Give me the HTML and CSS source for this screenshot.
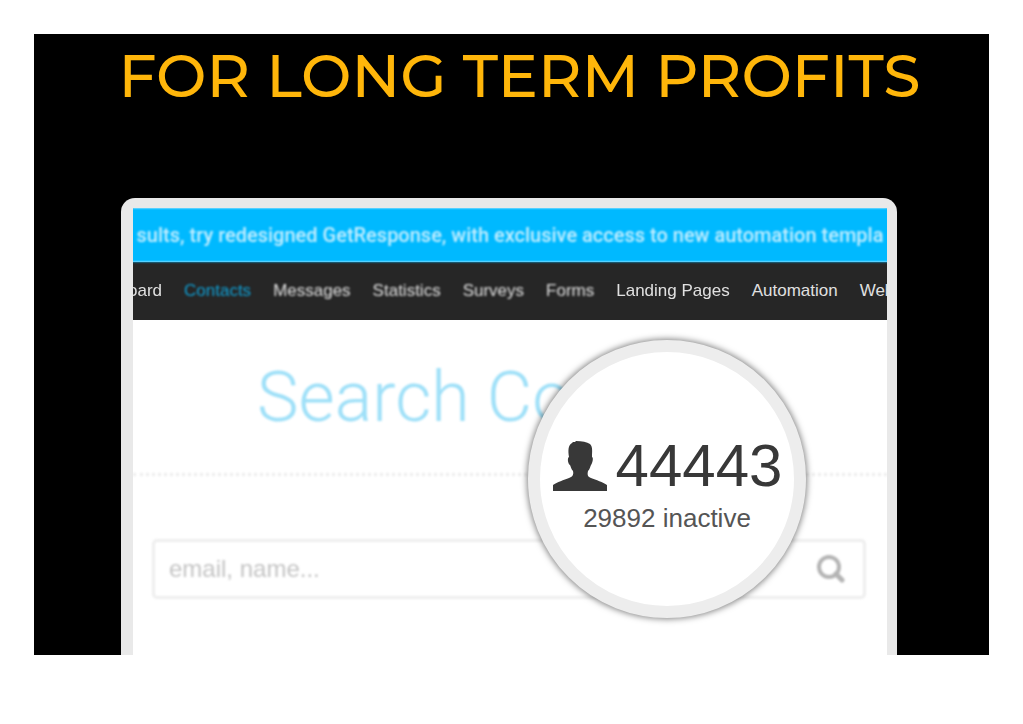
FILE: index.html
```html
<!DOCTYPE html>
<html lang="en">
<head>
  <meta charset="utf-8">
  <title>For long term profits</title>
  <link rel="stylesheet" href="styles.css">
</head>
<body>
<div class="slide">
  <h1 class="slide-title">FOR LONG TERM PROFITS</h1>
  <div class="device">
    <div class="screen">
      <p class="banner">sults, try redesigned GetResponse, with exclusive access to new automation templa</p>
      <nav class="menu">
        <a href="#" class="soft">oard</a>
        <a href="#" class="active blurred">Contacts</a>
        <a href="#" class="blurred">Messages</a>
        <a href="#" class="blurred">Statistics</a>
        <a href="#" class="blurred">Surveys</a>
        <a href="#" class="blurred">Forms</a>
        <a href="#" class="soft">Landing Pages</a>
        <a href="#">Automation</a>
        <a href="#">Web</a>
      </nav>
      <h2 class="heading">Search Co</h2>
      <form class="search">
        <input type="text" class="search-input" aria-label="Search contacts" placeholder="email, name...">
        <button type="button" class="search-button" aria-label="Search">
          <svg width="28" height="28" viewBox="0 0 28 28" fill="none" stroke="#b4b4b4">
            <circle cx="12" cy="12" r="10" stroke-width="4"/>
            <path d="M19 19l6 6" stroke-width="5" stroke-linecap="round"/>
          </svg>
        </button>
      </form>
    </div>
    <div class="lens">
      <div class="lens-count">
        <svg width="56" height="50" viewBox="0 0 56 50" fill="#383838">
          <path d="M1 50V44C5 41 12 39 17 37C20 36 22 34 21 30C19 28 19 26 18 24C16 23 15 17 17 16C16 10 16 4 20 2L21 1L23 1L24 0C30 0 35 1 38 3C41 6 40 11 40 16C42 17 40 23 39 24C38 26 38 28 36 30C35 34 36 36 39 37C44 39 51 41 55 44V50Z"/>
        </svg>
        <span>44443</span>
      </div>
      <p class="lens-note">29892 inactive</p>
    </div>
  </div>
</div>
</body>
</html>
```
FILE: styles.css
```css
body {
  margin: 0;
  padding: 34px;
  background: #fff;
  font-family: "Liberation Sans", Arial, sans-serif;
}

.slide {
  background: #000;
  overflow: hidden;
}

.slide-title {
  margin: 0;
  padding: 4px 0 84px 16px;
  color: #ffb60a;
  font-family: Montserrat, Inter, sans-serif;
  font-size: 60px;
  font-weight: 500;
  line-height: 76px;
  text-align: center;
  white-space: nowrap;
}

.device {
  position: relative;
  margin: 0 92px 0 87px;
  border: 12px solid #e9e9e9;
  border-width: 10px 10px 0 12px;
  border-radius: 14px 14px 0 0;
  background: #fff;
}

.screen {
  overflow: hidden;
  padding-bottom: 56px;
}

.banner {
  margin: 0 -3px;
  background: #00b9ff;
  color: #c4eeff;
  font-family: Roboto, sans-serif;
  font-size: 20px;
  font-weight: 500;
  line-height: 54px;
  text-align: center;
  white-space: nowrap;
  filter: blur(0.8px);
}

.menu {
  display: flex;
  gap: 22px;
  margin-left: -5px;
  background: #262626;
  line-height: 58px;
  white-space: nowrap;
}
.menu a {
  color: #e0e0e0;
  font-size: 17px;
  text-decoration: none;
}
.menu .active {
  color: #0f9fd4;
}

.soft {
  filter: blur(0.6px);
}
.blurred {
  filter: blur(1px);
}

.heading {
  margin: 0;
  padding: 35px 0 34px 124px;
  border-bottom: 3px dotted #ececec;
  color: #9fe0f8;
  font-family: Roboto, sans-serif;
  font-size: 70px;
  font-weight: 300;
  line-height: 84px;
  white-space: nowrap;
  filter: blur(1px);
}

.search {
  display: flex;
  align-items: center;
  margin: 63px 21px 0 19px;
  border: 3px solid #eee;
  border-radius: 5px;
  filter: blur(1px);
}
.search-input {
  flex: 1;
  min-width: 0;
  padding: 0 14px;
  border: 0;
  outline: 0;
  background: none;
  font-family: inherit;
  font-size: 24px;
  line-height: 54px;
  height: 54px;
}
.search-input::placeholder {
  color: #c4c4c4;
  opacity: 1;
}
.search-button {
  padding: 0 18px;
  border: 0;
  background: none;
  line-height: 0;
  cursor: pointer;
}

/* magnified contact counter */
.lens {
  position: absolute;
  top: 132px;
  right: 81px;
  box-sizing: border-box;
  width: 278px;
  height: 278px;
  padding-top: 82px;
  border: 12px solid #ededed;
  border-radius: 50%;
  background: #fff;
  box-shadow: 0 0 6px 1px rgba(0, 0, 0, 0.5);
  color: #383838;
  text-align: center;
}
.lens-count {
  display: flex;
  align-items: center;
  justify-content: center;
  gap: 8px;
  font-size: 60px;
  line-height: 64px;
}
.lens-note {
  margin: 5px 0 0;
  color: #555;
  font-size: 26px;
  line-height: 30px;
}
```
